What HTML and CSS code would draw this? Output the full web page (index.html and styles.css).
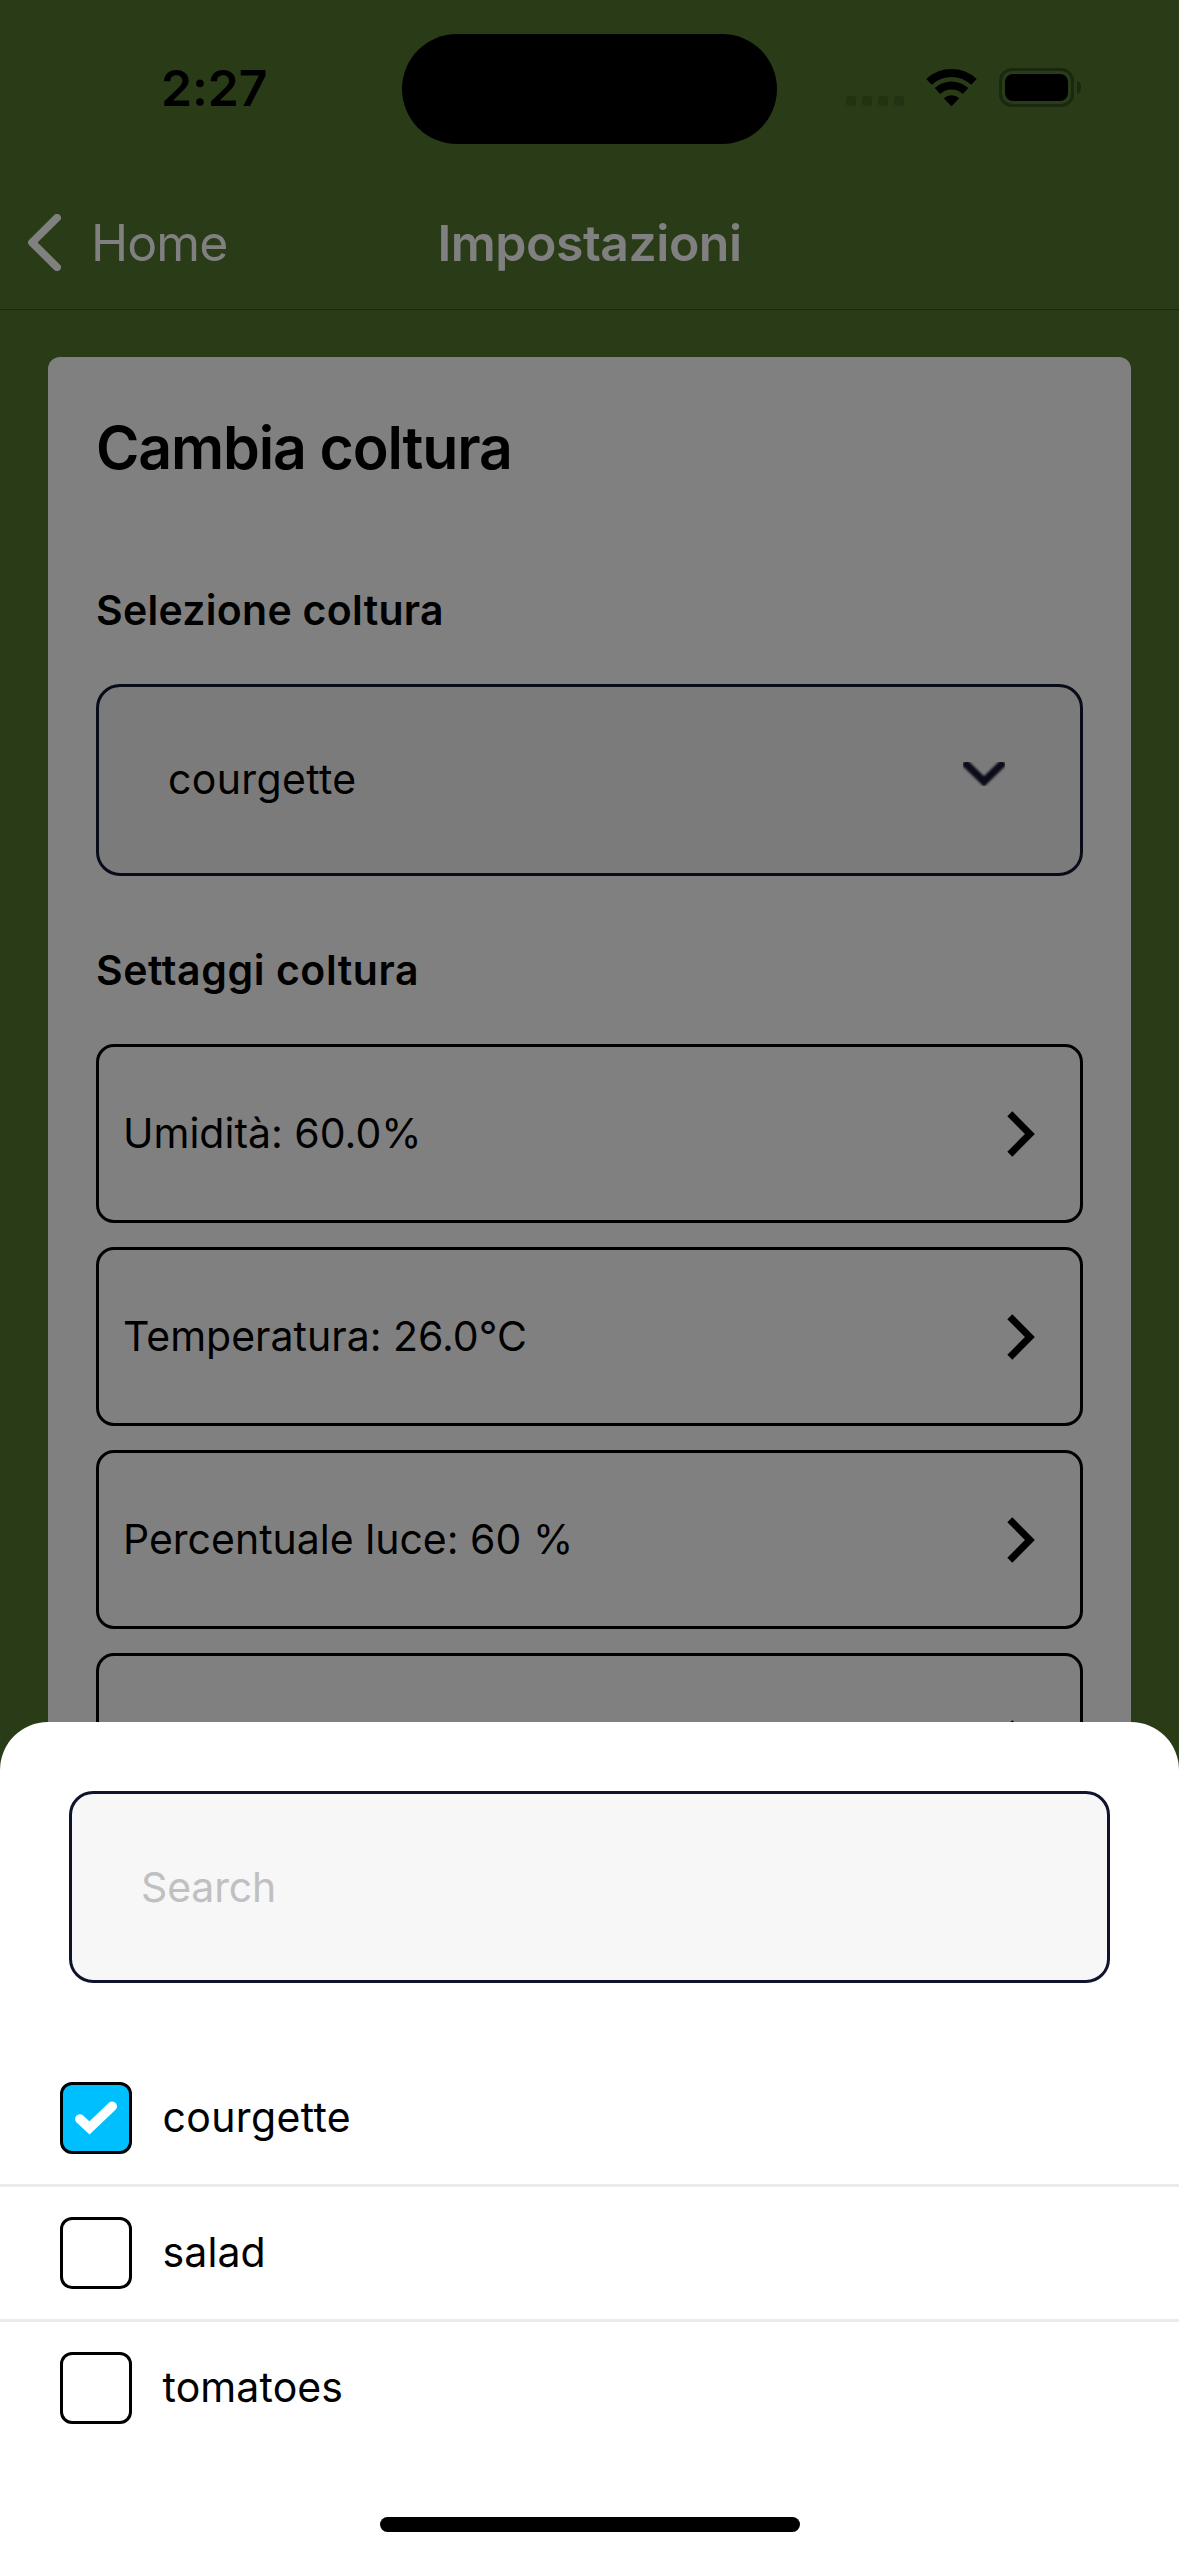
FILE: index.html
```html
<!DOCTYPE html>
<html lang="it">
<head>
<meta charset="utf-8">
<title>Impostazioni</title>
<link rel="stylesheet" href="styles.css">
</head>
<body>
<svg class="defs" aria-hidden="true">
  <symbol id="chevron-right" viewBox="0 0 28 48">
    <path d="M2.8 3.7 22.9 24 2.8 44.3" fill="none" stroke="#000" stroke-width="7"/>
  </symbol>
</svg>
<div class="phone">
  <main class="screen">
    <div class="status-bar">
      <span class="time">2:27</span>
      <span class="island"></span>
      <div class="indicators">
        <span class="signal"><i></i><i></i><i></i><i></i></span>
        <svg class="wifi" viewBox="926 68 51 39">
          <g fill="none" stroke="#000" stroke-width="8">
            <path d="M929 81.9A33 33 0 0 1 974 81.9"/>
            <path d="M937.5 91A20.5 20.5 0 0 1 965.5 91"/>
          </g>
          <path d="M951.5 106.3 943.7 98.2A11.8 11.8 0 0 1 959.3 98.2Z"/>
        </svg>
        <span class="battery"><span class="battery-level"></span></span>
        <span class="battery-cap"></span>
      </div>
    </div>
    <header class="nav">
      <a class="back">
        <svg class="back-icon" viewBox="28 214 33 57"><path d="M57 217.8 32 242.5 57 267.2" fill="none" stroke="#808080" stroke-width="7.8" stroke-linecap="round" stroke-linejoin="round"/></svg>
        <span class="back-label">Home</span>
      </a>
      <h1 class="nav-title">Impostazioni</h1>
    </header>
    <section class="card">
      <h2 class="card-title">Cambia coltura</h2>
      <h3 class="label">Selezione coltura</h3>
      <div class="select">
        <span class="select-value">courgette</span>
        <svg class="select-icon" viewBox="0 0 42 24"><path d="M1 0 21 19.5 41 0" fill="none" stroke="#0b0b1a" stroke-width="7.4"/></svg>
      </div>
      <h3 class="label label-settings">Settaggi coltura</h3>
      <div class="settings">
        <div class="setting"><span class="setting-text">Umidità: 60.0%</span><svg class="chevron"><use href="#chevron-right"/></svg></div>
        <div class="setting"><span class="setting-text">Temperatura: 26.0°C</span><svg class="chevron"><use href="#chevron-right"/></svg></div>
        <div class="setting"><span class="setting-text">Percentuale luce: 60 %</span><svg class="chevron"><use href="#chevron-right"/></svg></div>
        <div class="setting"><span class="setting-text"></span><svg class="chevron"><use href="#chevron-right"/></svg></div>
      </div>
    </section>
  </main>
  <section class="sheet">
    <div class="search">Search</div>
    <ul class="options">
      <li class="option">
        <span class="checkbox checked"><svg class="check" viewBox="0 0 72 72"><path d="M19.9 37 29.5 46 52.2 24.3" fill="none" stroke="#fff" stroke-width="9.6" stroke-linecap="round"/></svg></span>
        <span class="option-label wide">courgette</span>
      </li>
      <li class="option"><span class="checkbox"></span><span class="option-label">salad</span></li>
      <li class="option"><span class="checkbox"></span><span class="option-label">tomatoes</span></li>
    </ul>
    <div class="home-indicator"></div>
  </section>
</div>
</body>
</html>
```
FILE: styles.css
```css
* { box-sizing: border-box; }

body {
  margin: 0;
  background: #293c17;
  color: #000;
  font: 400 41px/50px Inter, "Liberation Sans", sans-serif;
}

h1, h2, h3, ul { margin: 0; padding: 0; }
svg { display: block; flex: none; }
.defs { display: none; }

.phone {
  display: flex;
  flex-direction: column;
  width: 1179px;
  height: 2556px;
  overflow: hidden;
}

.screen { height: 1722px; flex: none; overflow: hidden; }

/* Status bar */
.status-bar {
  display: grid;
  grid-template-columns: 402px 375px 1fr;
  height: 177px;
  padding-top: 34px;
  align-items: start;
}
.time {
  padding: 24px 0 0 161px;
  font-size: 50px;
  line-height: 60px;
  font-weight: 600;
  letter-spacing: -0.2px;
}
.island { height: 110px; border-radius: 55px; background: #000; }
.indicators { display: flex; padding: 34px 0 0 69px; }
.signal { display: flex; gap: 6px; padding-top: 28px; margin-right: 22px; }
.signal i { width: 10px; height: 10px; border-radius: 3.5px; background: #223213; }
.wifi { width: 51px; height: 39px; margin-right: 22px; }
.battery {
  width: 75px;
  height: 39px;
  padding: 3px;
  border: 3px solid #1b2810;
  border-radius: 13px;
}
.battery-level { display: block; height: 27px; border-radius: 8px; background: #000; }
.battery-cap {
  width: 4px;
  height: 13px;
  margin: 13px 0 0 3px;
  border-radius: 0 4px 4px 0 / 0 6.5px 6.5px 0;
  background: #1b2810;
}

/* Navigation bar */
.nav {
  display: grid;
  grid-template-columns: 1fr auto 1fr;
  align-items: center;
  height: 133px;
  border-bottom: 1px solid #1b2812;
  color: #808080;
  font-size: 50px;
  line-height: 60px;
}
.back { display: flex; align-items: center; padding-left: 28px; }
.back-icon { width: 33px; height: 57px; margin-top: -1px; }
.back-label { margin-left: 30px; letter-spacing: -0.9px; }
.nav-title { font-size: 50px; font-weight: 600; letter-spacing: -0.5px; }

/* Crop settings card */
.card {
  margin: 47px 48px 0;
  padding: 55px 48px 48px;
  border-radius: 12px;
  background: #808080;
}
.card-title { font-size: 59px; line-height: 71px; font-weight: 600; letter-spacing: -1.15px; }
.label { margin-top: 102px; font-size: 41px; font-weight: 600; letter-spacing: 0.29px; }
.label-settings { margin-top: 69px; letter-spacing: 0.58px; }

.select {
  display: flex;
  justify-content: space-between;
  height: 192px;
  margin-top: 49px;
  padding: 67px 75px 0 69px;
  border: 3px solid #080b18;
  border-radius: 24px;
  background: #7b7b7b;
}
.select-value { letter-spacing: 0.35px; }
.select-icon { width: 42px; height: 24px; margin-top: 8px; }
.select-icon path { filter: blur(0.9px); }

.settings { display: grid; gap: 24px; margin-top: 49px; }
.setting {
  display: flex;
  align-items: center;
  justify-content: space-between;
  height: 179px;
  padding: 0 45px 0 24px;
  border: 3px solid #000;
  border-radius: 18px;
}
.setting-text { padding-bottom: 2px; }
.chevron { width: 28px; height: 48px; }

/* Bottom sheet */
.sheet {
  flex: 1;
  display: flex;
  flex-direction: column;
  padding-top: 69px;
  border-radius: 48px 48px 0 0;
  background: #fff;
}
.search {
  height: 192px;
  margin: 0 69px;
  padding: 68px 69px;
  border: 3px solid #10132c;
  border-radius: 24px;
  background: #f7f7f7;
  color: #c0c0c1;
  letter-spacing: -0.16px;
}
.options { margin-top: 69px; list-style: none; }
.option {
  display: flex;
  align-items: center;
  height: 135px;
  padding-left: 60px;
  border-bottom: 3px solid #ebebec;
}
.option:last-child { border-color: transparent; }
.checkbox { width: 72px; height: 72px; border: 3px solid #000; border-radius: 12px; }
.checked { background: #00bfff; }
.check { width: 72px; height: 72px; margin: -3px; }
.option-label { padding: 0 0 2px 30.5px; letter-spacing: 0.12px; }
.wide { letter-spacing: 0.35px; }
.home-indicator {
  width: 420px;
  height: 15px;
  margin: auto auto 24px;
  border-radius: 8px;
  background: #000;
}
```
